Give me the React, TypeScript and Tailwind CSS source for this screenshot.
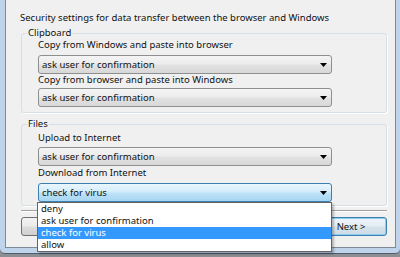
import React from "react";

function Arrow() {
  return (
    <svg width="7" height="4" viewBox="0 0 7 4" className="shrink-0">
      <path d="M0 0 H7 L3.5 4 Z" fill="#000" />
    </svg>
  );
}

function Select({ value, focused = false, children }: { value: string; focused?: boolean; children?: React.ReactNode }) {
  return (
    <div className="relative">
      <div
        className={
          focused
            ? "flex h-[19px] w-[294px] items-center justify-between rounded-[3px] border border-[#3c7fb1] bg-[linear-gradient(#eaf6fd,#d3ecfb_48%,#bde3f8_52%,#a6d5f2)] pl-[3px] pr-[4px]"
            : "flex h-[19px] w-[294px] items-center justify-between rounded-[3px] border border-[#8e8f8f] bg-[linear-gradient(#f4f4f4,#ececec_48%,#e2e2e2_52%,#d8d8d8)] pl-[3px] pr-[4px]"
        }
      >
        <span className="leading-[12px]">{value}</span>
        <Arrow />
      </div>
      {children}
    </div>
  );
}

const options = ["deny", "ask user for confirmation", "check for virus", "allow"];

export default function App() {
  return (
    <div className="h-[257px] w-[400px] overflow-hidden bg-[#8b8e92] font-['Noto_Sans',sans-serif] text-[9.5px] text-[#111]">
      <div className="h-[254px] rounded-b-[5px] border-b border-[#4f5d6b] bg-[#bfd3ea] pl-[5px] pr-[4px]">
        <div className="h-[248px] border-x border-b border-[#7d8a97] bg-[#f0f0f0] pl-[14px] pr-[8px]">
          <div className="pt-[11px] leading-[14px]">
            Security settings for data transfer between the browser and Windows
          </div>

          <fieldset className="ml-[1px] mt-[2px] rounded-[3px] border border-[#d5dfe5] pb-[5px] pl-[16px] shadow-[1px_1px_0_#ffffff]">
            <legend className="-ml-[11px] px-[1px] leading-[12px]">Clipboard</legend>
            <div className="leading-[12px]">Copy from Windows and paste into browser</div>
            <div className="mt-[4px]">
              <Select value="ask user for confirmation" />
            </div>
            <div className="leading-[12px]">Copy from browser and paste into Windows</div>
            <div className="mt-[2px]">
              <Select value="ask user for confirmation" />
            </div>
          </fieldset>

          <fieldset className="ml-[1px] mt-[5px] rounded-[3px] border border-[#d5dfe5] pb-[3px] pl-[16px] shadow-[1px_1px_0_#ffffff]">
            <legend className="-ml-[11px] px-[1px] leading-[12px]">Files</legend>
            <div className="mt-[2px] leading-[12px]">Upload to Internet</div>
            <div className="mt-[3px]">
              <Select value="ask user for confirmation" />
            </div>
            <div className="mt-[1px] leading-[12px]">Download from Internet</div>
            <div className="mt-[4px]">
              <Select value="check for virus" focused>
                <div className="absolute left-[-1px] top-[19px] z-10 w-[295px] border border-[#646464] bg-white shadow-[2px_2px_2px_rgba(0,0,0,0.25)]">
                  {options.map((o) => (
                    <div
                      key={o}
                      className={
                        o === "check for virus"
                          ? "h-[12px] bg-[#3399ff] pl-[3px] leading-[12px] text-white"
                          : "h-[12px] pl-[3px] leading-[12px]"
                      }
                    >
                      {o}
                    </div>
                  ))}
                </div>
              </Select>
            </div>
          </fieldset>

          <div className="ml-[1px] mt-[4px] border-b border-t border-b-white border-t-[#a0a0a0]" />

          <div className="ml-[1px] mt-[5px] flex justify-between">
            <div className="h-[19px] w-[70px] rounded-[3px] border border-[#707070] bg-[linear-gradient(#f2f2f2,#ebebeb_48%,#dddddd_52%,#cfcfcf)]" />
            <div className="flex h-[19px] w-[72px] items-center justify-center rounded-[3px] border border-[#3c7fb1] bg-[linear-gradient(#eef5fa,#e3edf4_48%,#d6e3ec_52%,#cbdbe6)] leading-[12px] shadow-[inset_0_0_0_1px_#8fcdf0]">
              Next &gt;
            </div>
          </div>
        </div>
      </div>
    </div>
  );
}
